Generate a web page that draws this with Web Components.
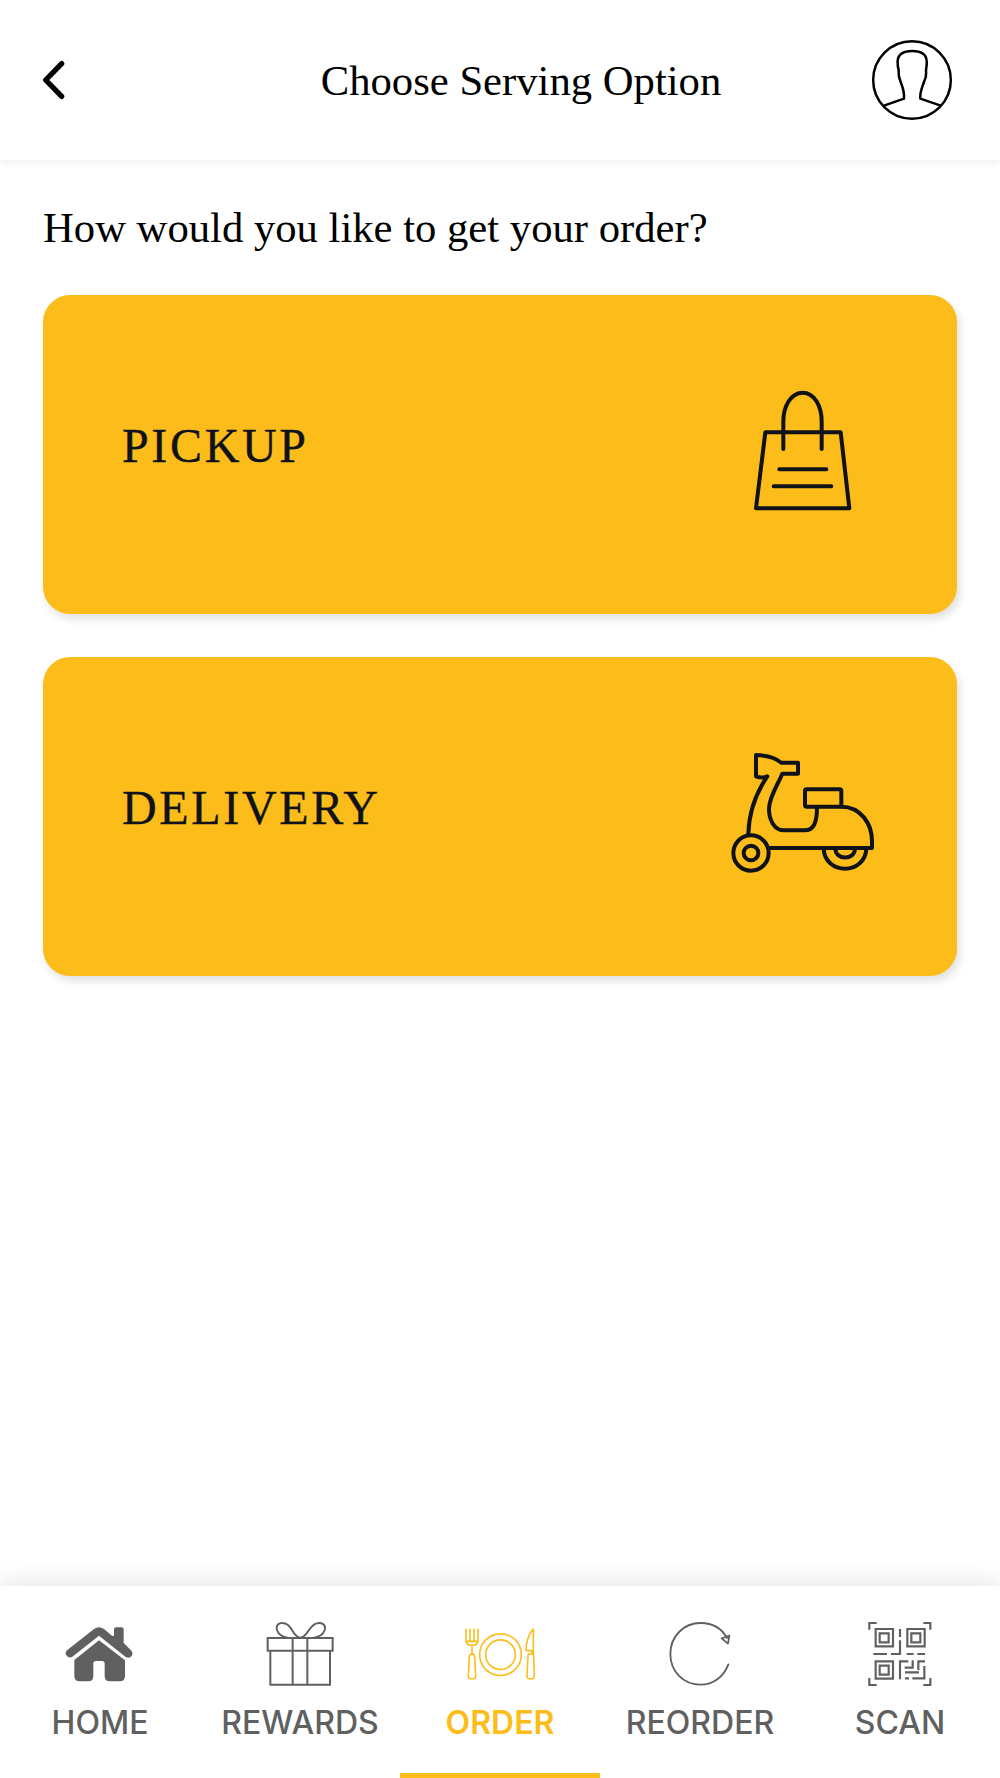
<!DOCTYPE html>
<html lang="en">
<head>
<meta charset="utf-8">
<title>Choose Serving Option</title>
<style>
html, body { margin: 0; height: 100%; background: #fff; }
body { font-family: "Liberation Serif", "Times New Roman", serif; color: #000; }
</style>
</head>
<body>
<serving-page></serving-page>
<script>
const define = (name, html) => {
  const template = document.createElement('template');
  template.innerHTML = html;
  customElements.define(name, class extends HTMLElement {
    constructor() {
      super();
      this.attachShadow({ mode: 'open' }).append(template.content.cloneNode(true));
    }
  });
};

const ICONS = {
  back: ['90 165 150 150', 50, 50, `<path d="M185 191 137 240l48 49" stroke-width="16"/>`],
  user: ['1080 90 300 300', 100, 100, `<g stroke-width="7.5"><circle cx="1236" cy="240" r="116.5"/>
    <path d="M1154 316L1212 296C1214 272 1206 258 1201 243C1194 228 1196 218 1196 210C1192 198 1193 190 1193 182C1195 160 1215 153 1237 153C1259 153 1278 160 1280 182C1281 190 1280 198 1278 210C1278 222 1281 228 1273 243C1266 264 1259 275 1261 296L1320 316"/></g>`],
  bag: ['-15 9 540 480', 180, 160, `<g stroke-width="12"><path d="M136 187H362L388 415H108Z"/>
    <path d="M190 237V155C190 108 213 68 248 68S305 108 305 155V237M178 298H319M161 349H334"/></g>`],
  scooter: ['0 0 540 480', 180, 160, `<g stroke-width="12">
    <path d="M100 296C102 230 127 168 157 124C146 129 134 128 123 124V60C153 61 180 66 198 83H249V116H202C192 143 162 185 162 222C162 253 177 286 205 286H268C296 286 306 264 306 217"/>
    <rect x="270" y="163" width="109" height="52" rx="5"/>
    <path d="M379 215C437 215 471 266 471 319V339H163"/>
    <circle cx="108" cy="354" r="53"/><circle cx="108" cy="354" r="22"/>
    <path d="M326 342C331 421 449 421 454 342M361 342C362 376 419 376 420 342"/></g>`],
  home: ['-120 0 600 270', 200, 90, `<g fill="currentColor" stroke="none">
    <path d="M177 121 103 180V228Q103 244 119 244H145Q160 244 160 228V191Q160 183 168 183H186Q194 183 194 191V228Q194 244 209 244H239Q255 244 255 228V181Z"/>
    <path d="M222 104V88Q222 82 228 82H244Q251 82 251 88V129L273 151Q281 160 275 168T257 171L177 107 97 170Q87 176 80 167T82 150L162 87Q177 76 192 87L216 107Q222 110 222 104Z"/></g>`],
  gift: ['-30 0 600 270', 200, 90, `<g stroke-width="6" stroke-linejoin="miter">
    <path d="M173 114H368V152H173ZM181 152V254H360V152M248 114V254M292 114V254"/>
    <path d="M232 113C207 108 198 92 200 81C202 68 220 65 234 75C248 86 252 112 271 113C290 112 293 86 313 73C327 65 343 69 345 81C347 92 338 108 313 113"/></g>`],
  plate: ['30 0 600 270', 200, 90, `<g stroke-width="4.800"><circle cx="331.500" cy="164" r="62.500"/><circle cx="331.500" cy="164" r="44.500"/>
    <path d="M228 87V119C228 131 236 136 246 136S264 131 264 119V87M240 88V122M252 88V122M228 124H264M246 136V162"/>
    <path d="M246 162C240 162 238 165 238 172L235 228C235 240 257 240 257 228L254 172C254 165 252 162 246 162Z"/>
    <path d="M430 87C414 103 408 132 408 151L415 152H426V162M430 87V162M415 162H427Q431 162 431 168L433 228C433 240 411 240 411 228L414 168Q414 162 419 162"/></g>`],
  reorder: ['-30 0 600 270', 200, 90, `<g stroke-width="5.500"><path d="M355 193C341 231 309 254 272 254C220 254 181 214 181 162C181 110 220 69 272 69C311 69 336 87 351 114"/>
    <path d="M335 115 358 107 354 131Z"/></g>`],
  scan: ['-90 0 600 270', 200, 90, `<g stroke-width="6.500" stroke-linecap="butt" stroke-linejoin="miter">
    <path d="M118 89V69H140M280 69H301V89M118 234V255H140M280 255H301V234"/>
    <path d="M137 87H189V139H137ZM232 87H284V139H232ZM137 184H189V236H137Z"/>
    <path d="M149 100H176V127H149ZM244 100H271V127H244ZM149 197H176V224H149Z"/>
    <path d="M210 87V111M210 121V162H183M130 162H171M230 162H251M262 162H285M210 238V184H235M248 181V203H224M265 210V184H285M225 217H267M283 198V235H247M225 235H237"/></g>`]
};

customElements.define('app-icon', class extends HTMLElement {
  connectedCallback() {
    if (this.shadowRoot) return;
    const [box, w, h, art] = ICONS[this.getAttribute('name')];
    this.attachShadow({ mode: 'open' }).innerHTML =
      `<style>:host{display:block;flex:none}svg{display:block}</style>
       <svg viewBox="${box}" width="${w}" height="${h}" fill="none" stroke="currentColor" stroke-linecap="round" stroke-linejoin="round" aria-hidden="true">${art}</svg>`;
  }
});

define('app-header', `<style>
  :host { display: flex; align-items: center; height: 160px; padding: 0 40px 0 30px; box-sizing: border-box;
    flex: none; background: #fff; box-shadow: 0 3px 8px rgba(0,0,0,.06); }
  h1 { flex: 1; margin: 0; padding: 2px 0 0 102px; text-align: center; font-size: 42.67px; font-weight: 400; line-height: 50px; }
</style><app-icon name="back"></app-icon><h1><slot></slot></h1><app-icon name="user"></app-icon>`);

define('serving-option', `<style>
  :host { display: flex; justify-content: space-between; align-items: flex-start; height: 319px; box-sizing: border-box;
    padding: 78px 62px 0 79px; border-radius: 27px; background: #fcbd1b; color: #10121a;
    box-shadow: 3px 5px 8px rgba(0,0,0,.12); }
  .label { font-size: 48px; line-height: 56px; letter-spacing: 2.67px; margin-top: 45px; -webkit-text-stroke: .35px currentColor; }
</style><span class="label"><slot></slot></span><slot name="icon"></slot>`);

define('nav-tab', `<style>
  :host { display: flex; flex-direction: column; align-items: center; flex: 1 1 0; min-width: 0; color: #606060;
    font: 500 32px/40px Inter, sans-serif; }
  :host([active]) { color: #fcbd1b; font-weight: 600; }
  .label { margin-top: 13px; white-space: nowrap; }
  .bar { width: 100%; height: 5.500px; margin-top: auto; }
  :host([active]) .bar { background: #fcbd1b; }
</style><slot name="icon"></slot><span class="label"><slot></slot></span><div class="bar"></div>`);

define('tab-bar', `<style>
  :host { display: flex; flex: none; height: 192px; padding-top: 14px; box-sizing: border-box; background: #fff;
    box-shadow: 0 -3px 24px rgba(0,0,0,.11); }
</style><slot></slot>`);

define('serving-page', `<style>
  :host { display: flex; flex-direction: column; height: 1778px; overflow: hidden; }
  main { flex: 1; padding: 43px 43px 0; }
  h2 { margin: 0 0 42px; font-size: 42.67px; font-weight: 400; line-height: 50px; }
  .options { display: flex; flex-direction: column; gap: 43px; }
</style>
<app-header>Choose Serving Option</app-header>
<main>
  <h2>How would you like to get your order?</h2>
  <div class="options">
    <serving-option>PICKUP<app-icon slot="icon" name="bag"></app-icon></serving-option>
    <serving-option>DELIVERY<app-icon slot="icon" name="scooter"></app-icon></serving-option>
  </div>
</main>
<tab-bar>
  <nav-tab>HOME<app-icon slot="icon" name="home"></app-icon></nav-tab>
  <nav-tab>REWARDS<app-icon slot="icon" name="gift"></app-icon></nav-tab>
  <nav-tab active>ORDER<app-icon slot="icon" name="plate"></app-icon></nav-tab>
  <nav-tab>REORDER<app-icon slot="icon" name="reorder"></app-icon></nav-tab>
  <nav-tab>SCAN<app-icon slot="icon" name="scan"></app-icon></nav-tab>
</tab-bar>`);
</script>
</body>
</html>
